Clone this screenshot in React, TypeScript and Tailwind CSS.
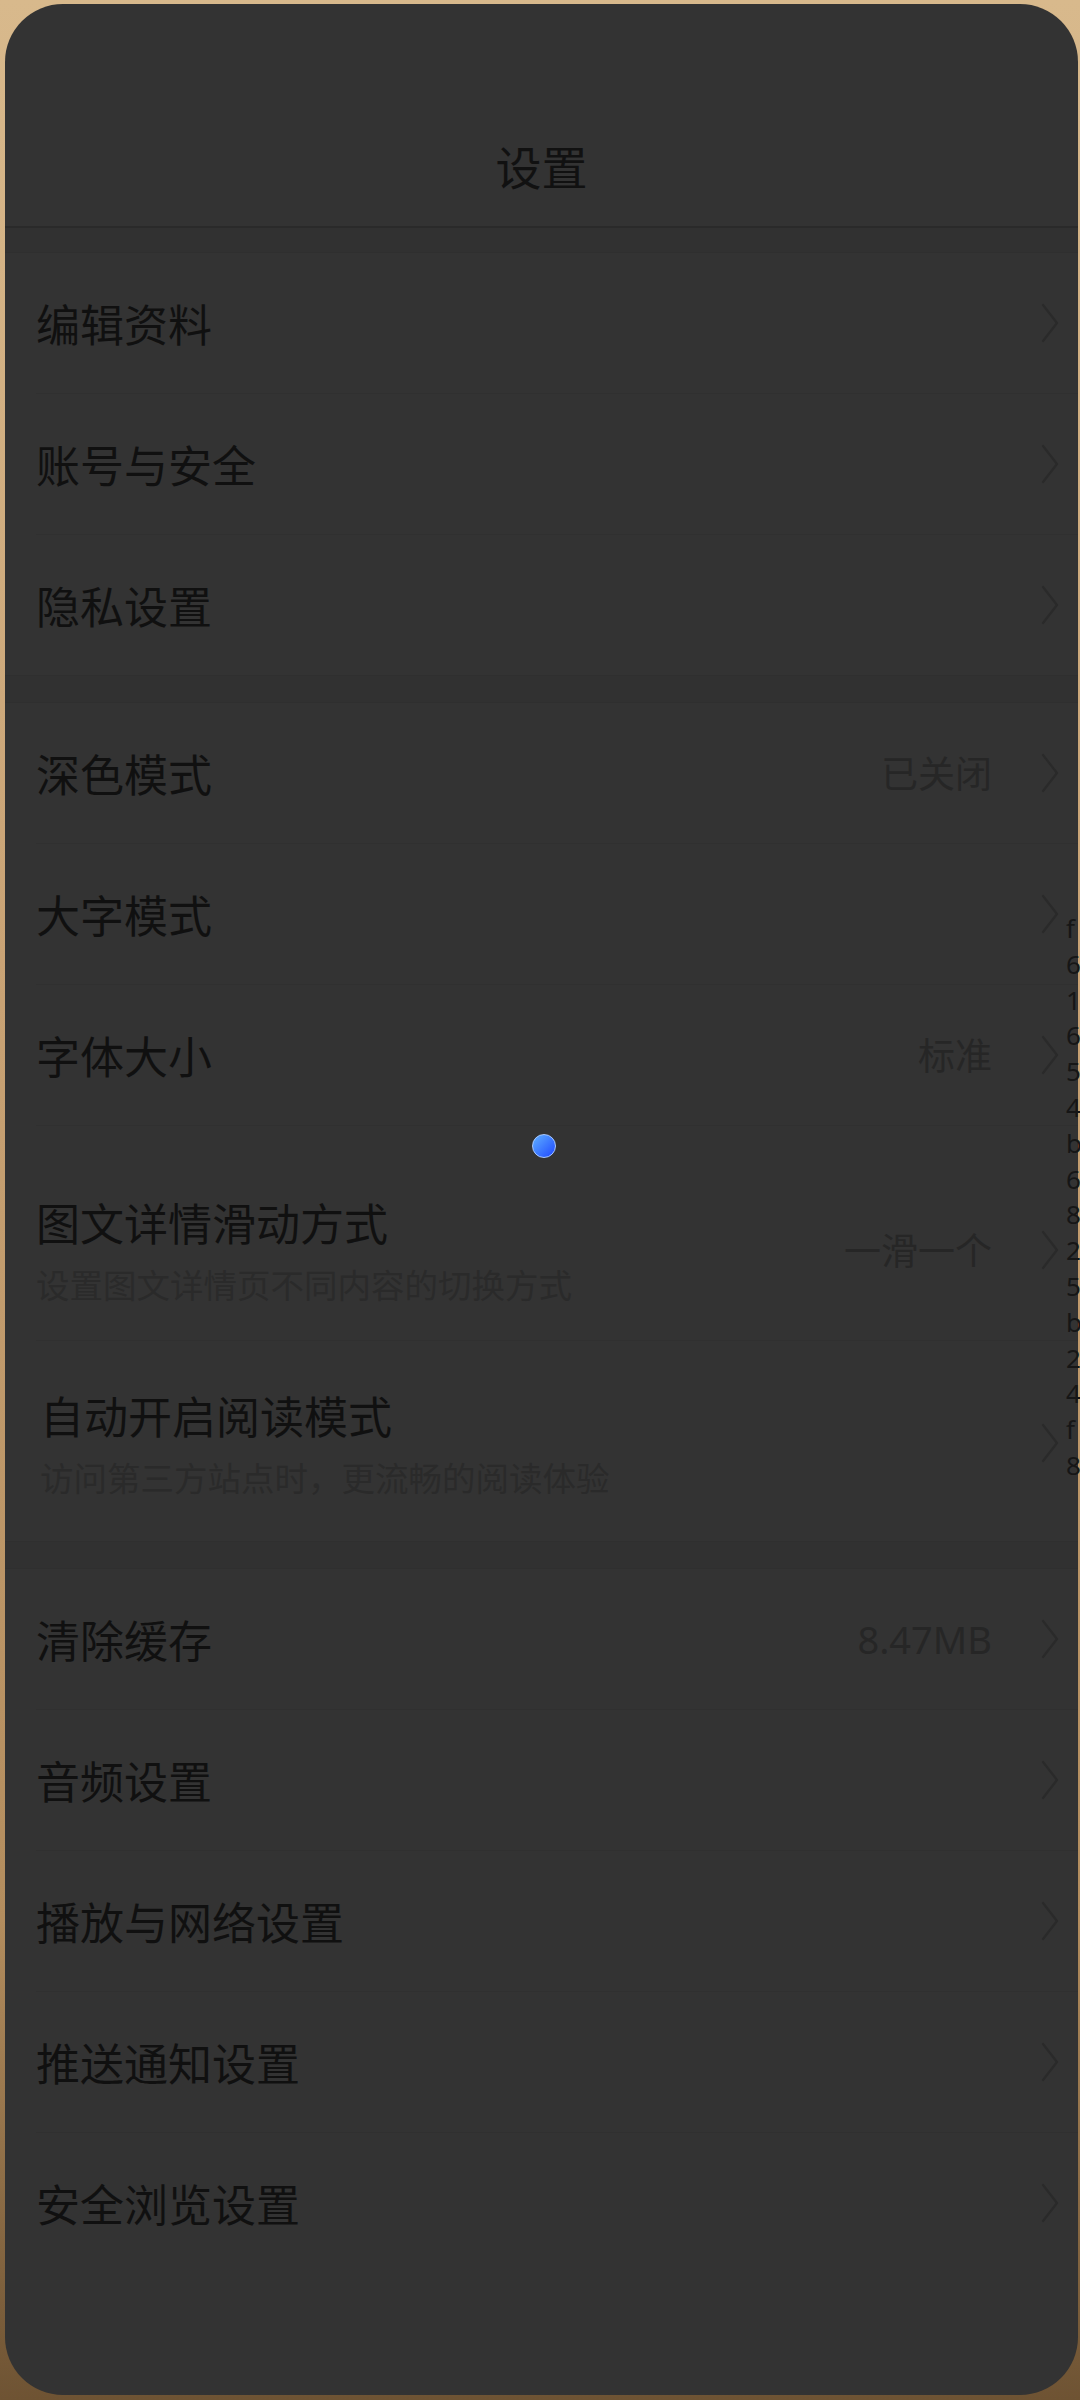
import React from "react";

type Row = {
  title: string;
  sub?: string;
  value?: string;
  // explicit sizing for the two-line rows
  pad?: string;
};

const sections: Row[][] = [
  [{ title: "编辑资料" }, { title: "账号与安全" }, { title: "隐私设置" }],
  [
    { title: "深色模式", value: "已关闭" },
    { title: "大字模式" },
    { title: "字体大小", value: "标准" },
    {
      title: "图文详情滑动方式",
      sub: "设置图文详情页不同内容的切换方式",
      value: "一滑一个",
      pad: "pt-[70px] pb-[36px]",
    },
    {
      title: "自动开启阅读模式",
      sub: "访问第三方站点时，更流畅的阅读体验",
      pad: "pt-[48px] pb-[44px] pl-[4px]",
    },
  ],
  [
    { title: "清除缓存", value: "8.47MB" },
    { title: "音频设置" },
    { title: "播放与网络设置" },
    { title: "推送通知设置" },
    { title: "安全浏览设置" },
  ],
];

const debugChars = "f6165 4b682 5b24f8".replace(/\s/g, "").split("");

function Chevron() {
  return (
    <svg width="20" height="40" viewBox="0 0 20 40" fill="none" className="shrink-0">
      <path d="M3 2 L17 20 L3 38" stroke="#2a2a2a" strokeWidth="2.2" strokeLinecap="round" strokeLinejoin="round" />
    </svg>
  );
}

function SettingRow({ row, last }: { row: Row; last: boolean }) {
  return (
    <div className={last ? "" : "border-b border-[#303030]"}>
      <div
        className={
          row.sub
            ? `flex items-center pr-[18px] ${row.pad}`
            : "flex items-center h-[140px] pr-[18px]"
        }
      >
        <div className="flex-1 min-w-0">
          <div className="text-[44px] leading-[53px] text-[#101010]">{row.title}</div>
          {row.sub && (
            <div className="text-[33.5px] leading-[40px] text-[#2a2a2a] mt-[15px]">{row.sub}</div>
          )}
        </div>
        {row.value && (
          <div
            className="text-[37px] text-[#262626] mr-[48px]"
            style={row.value === "8.47MB" ? { fontFamily: '"Noto Sans", sans-serif', fontSize: "38px" } : undefined}
          >
            {row.value}
          </div>
        )}
        <Chevron />
      </div>
    </div>
  );
}

export default function App() {
  return (
    <div
      className="relative h-[2400px] w-full overflow-hidden bg-[linear-gradient(180deg,#d8b98c_0%,#c9a375_40%,#b38d5e_80%,#6e5333_100%)]"
      style={{ fontFamily: '"Noto Sans CJK SC", "Noto Sans", sans-serif' }}
    >
      <div className="ml-[5px] mr-[2px] mt-[4px] h-[2391px] rounded-[58px] bg-[#333333] overflow-hidden">
        {/* Header */}
        <div className="h-[222px] pt-[138px] text-center">
          <span className="text-[46px] leading-none text-[#111111]">设置</span>
        </div>
        <div className="h-[2px] bg-[#2a2a2a]" />
        <div className="h-[25px] bg-[#313131] border-b border-[#2f2f2f]" />

        {sections.map((sec, si) => (
          <div key={si}>
            {si > 0 && <div className="h-[28px] bg-[#313131] border-y border-[#2f2f2f]" />}
            <div className="pl-[31px]">
              {sec.map((row, ri) => (
                <SettingRow key={row.title} row={row} last={ri === sec.length - 1} />
              ))}
            </div>
          </div>
        ))}
      </div>

      {/* touch indicator */}
      <div className="absolute left-[532px] top-[1134px] h-[24px] w-[24px] rounded-full border-[1.5px] border-[#a9c9ff] bg-[linear-gradient(135deg,#5fb0ff,#1f48ff)]" />

      {/* debug overlay column on the right edge */}
      <div
        className="absolute left-[1066px] top-[911px] text-[26px] leading-[35.8px] text-[#161616]"
        style={{ fontFamily: '"Noto Sans", sans-serif' }}
      >
        {debugChars.map((c, i) => (
          <div key={i}>{c}</div>
        ))}
      </div>
    </div>
  );
}
